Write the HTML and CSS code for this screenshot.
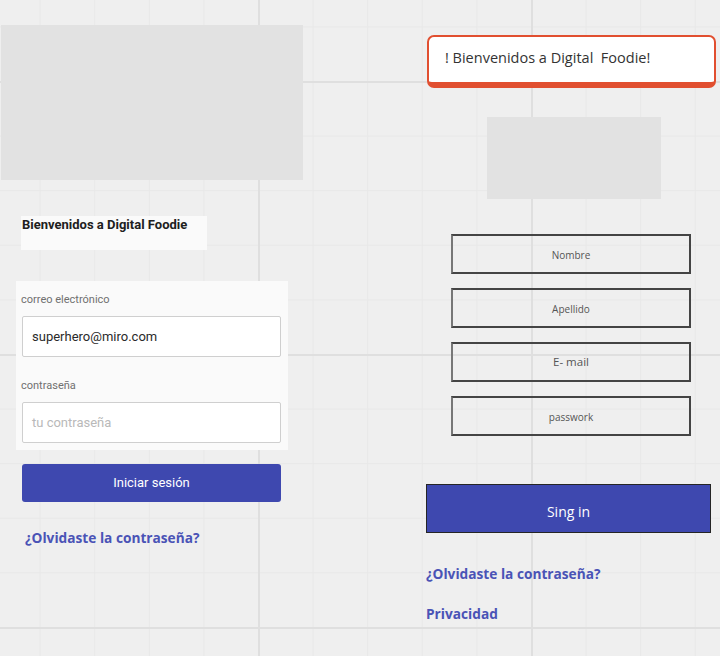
FILE: index.html
```html
<!DOCTYPE html>
<html lang="es">
<head>
<meta charset="utf-8">
<title>Digital Foodie</title>
<link rel="stylesheet" href="styles.css">
</head>
<body>
<div class="board">
  <section class="left">
    <div class="placeholder hero"></div>
    <div class="heading">Bienvenidos a Digital Foodie</div>
    <form class="panel">
      <label class="field-label">correo electrónico</label>
      <div class="input filled">superhero@miro.com</div>
      <label class="field-label second">contraseña</label>
      <div class="input empty">tu contraseña</div>
    </form>
    <button class="login-btn" type="button">Iniciar sesión</button>
    <a class="link left-link">¿Olvidaste la contraseña?</a>
  </section>
  <section class="right">
    <div class="toast">! Bienvenidos a Digital&nbsp; Foodie!</div>
    <div class="placeholder small"></div>
    <div class="reg-fields">
      <div class="reg-input">Nombre</div>
      <div class="reg-input">Apellido</div>
      <div class="reg-input big">E- mail</div>
      <div class="reg-input">passwork</div>
    </div>
    <button class="signin-btn" type="button">Sing in</button>
    <a class="link right-link">¿Olvidaste la contraseña?</a>
    <a class="link right-link privacy">Privacidad</a>
  </section>
</div>
</body>
</html>
```
FILE: styles.css
```css
html {
  height: 100%;
  background-color: #efefef;
  background-image:
    linear-gradient(90deg, #dfdfdf 0 2px, transparent 2px),
    linear-gradient(180deg, #dfdfdf 0 2px, transparent 2px),
    linear-gradient(90deg, #e8e8e8 0 1px, transparent 1px),
    linear-gradient(180deg, #e8e8e8 0 1px, transparent 1px);
  background-size: 273px 273px, 273px 273px, 54.6px 54.6px, 54.6px 54.6px;
  background-position: 258px 0, 0 81px, 258px 0, 0 81px;
}

body {
  margin: 0;
  font-family: Roboto, "Liberation Sans", sans-serif;
  color: #222;
}

.board {
  display: flex;
  width: 720px;
  height: 656px;
}

.left {
  width: 303px;
  padding-top: 25px;
  display: flex;
  flex-direction: column;
  align-items: flex-start;
}

.placeholder {
  background: #e2e2e2;
}

.hero {
  margin-left: 1px;
  width: 302px;
  height: 155px;
}

.heading {
  margin: 36px 0 0 21px;
  width: 186px;
  height: 34px;
  box-sizing: border-box;
  background: #fafafa;
  padding: 1px 0 0 1px;
  font-weight: 700;
  font-size: 13px;
  line-height: 15px;
  color: #202020;
}

.panel {
  margin: 31px 0 0 16px;
  width: 272px;
  height: 169px;
  box-sizing: border-box;
  background: #fafafa;
  padding: 12px 7px 0 6px;
  display: flex;
  flex-direction: column;
}

.field-label {
  display: block;
  margin-left: -1px;
  height: 14px;
  line-height: 14px;
  font-size: 11px;
  color: #707070;
  margin-bottom: 9px;
}

.field-label.second {
  margin-top: 22px;
  margin-bottom: 9px;
}

.input {
  height: 41px;
  box-sizing: border-box;
  border: 1px solid #cfcfcf;
  border-radius: 2px;
  background: #fff;
  padding: 0 9px;
  font-size: 13px;
  line-height: 39px;
}

.input.filled {
  color: #2a2a2a;
}

.input.empty {
  color: #b9b9b9;
}

.login-btn {
  margin: 14px 0 0 22px;
  width: 259px;
  height: 38px;
  border: 0;
  border-radius: 3px;
  background: #3e48af;
  color: #fff;
  font-family: Roboto, "Liberation Sans", sans-serif;
  font-size: 13px;
  padding: 0 0 2px;
}

.link {
  font-family: "Open Sans", "DejaVu Sans", sans-serif;
  font-weight: 700;
  font-size: 13.7px;
  color: #4a53b6;
  display: block;
  line-height: 20px;
}

.left-link {
  margin: 26px 0 0 25px;
}

.right {
  margin-left: 123px;
  width: 294px;
  padding-top: 35px;
  display: flex;
  flex-direction: column;
  align-items: flex-start;
}

.toast {
  margin-left: 1px;
  width: 289px;
  height: 53px;
  box-sizing: border-box;
  background: #fff;
  border: 2px solid #e14f30;
  border-bottom-width: 6px;
  border-radius: 7px;
  padding: 0 0 0 16px;
  font-family: "Open Sans", "DejaVu Sans", sans-serif;
  font-size: 14.5px;
  line-height: 42px;
  color: #333;
  white-space: pre;
}

.small {
  margin: 29px 0 0 61px;
  width: 174px;
  height: 82px;
}

.reg-fields {
  margin: 35px 0 0 25px;
  display: flex;
  flex-direction: column;
  gap: 14px;
}

.reg-input {
  width: 240px;
  height: 40px;
  box-sizing: border-box;
  border: 2px solid #444;
  border-left-color: #777;
  font-family: "Open Sans", "DejaVu Sans", sans-serif;
  font-size: 10px;
  line-height: 36px;
  padding-top: 1px;
  color: #555;
  text-align: center;
}

.reg-input.big {
  font-size: 11.5px;
  line-height: 34px;
}

.signin-btn {
  margin-top: 48px;
  width: 285px;
  height: 49px;
  border: 1.5px solid #252525;
  background: #3e48af;
  color: #fff;
  font-family: "Open Sans", "DejaVu Sans", sans-serif;
  font-size: 14px;
  padding: 6px 0 0;
}

.right-link {
  margin-top: 31px;
}

.right-link.privacy {
  margin-top: 20px;
}
```
